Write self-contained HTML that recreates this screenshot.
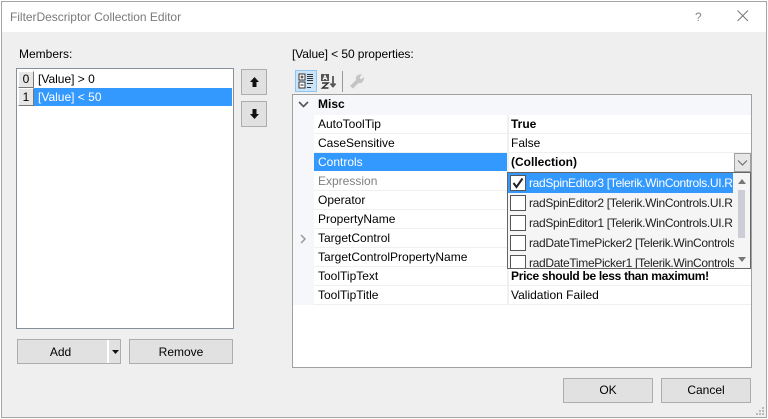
<!DOCTYPE html>
<html><head><meta charset="utf-8"><style>
html,body{margin:0;padding:0;width:768px;height:419px;overflow:hidden;background:#fff}
*{box-sizing:border-box}
body{font-family:"Liberation Sans",sans-serif;font-size:12px;color:#000;position:relative}
div,svg{position:absolute}
.t{white-space:nowrap;line-height:16px;height:16px}
.b{background:#e1e1e1;border:1px solid #adadad;text-align:center;line-height:23px}
.r{left:314px;width:194px;height:19px;border-bottom:1px solid #f0f0f0}
.v{left:509px;width:242px;height:19px;border-bottom:1px solid #f0f0f0}
.n{left:318px}
.p{left:511px}
.cb{left:510px;width:16px;height:16px;background:#fff;border:1px solid #555}
.it{left:529px;width:205px;overflow:hidden;color:#222;letter-spacing:-.33px}
</style></head><body>
<div style="left:1px;top:1px;width:766px;height:417px;background:#efefef;border:1px solid #a5a5a5"></div>
<div style="left:2px;top:2px;width:764px;height:30px;background:#fff"></div>
<div class="t" style="left:10px;top:9px;color:#7a7a7a;letter-spacing:-.03px">FilterDescriptor Collection Editor</div>
<div class="t" style="left:695px;top:9px;color:#8a8a8a">?</div>
<svg style="left:737px;top:10px" width="12" height="12"><path d="M.5.5l10.500 10.500M11 .5L.5 11" stroke="#777" fill="none"/></svg>

<div class="t" style="left:19px;top:46px">Members:</div>
<div style="left:16px;top:68px;width:218px;height:261px;background:#fff;border:1px solid #87919c"></div>
<div style="left:18px;top:71px;width:16px;height:17px;background:#e6e6e6;border:1px solid;border-color:#fff #777 #777 #fff;text-align:center;line-height:15px">0</div>
<div style="left:18px;top:88px;width:16px;height:18px;background:#e6e6e6;border:1px solid;border-color:#fff #777 #777 #fff;text-align:center;line-height:16px">1</div>
<div class="t" style="left:38px;top:71px">[Value] &gt; 0</div>
<div style="left:34px;top:88px;width:198px;height:18px;background:#3399ff"></div>
<div class="t" style="left:38px;top:89px;color:#fff">[Value] &lt; 50</div>

<div class="b" style="left:241px;top:69px;width:26px;height:26px"></div>
<svg style="left:249px;top:76px" width="11" height="12"><path d="M5.500 1L10 6H7.500V11H3.500V6H1z" fill="#111"/></svg>
<div class="b" style="left:241px;top:101px;width:26px;height:26px"></div>
<svg style="left:249px;top:108px" width="11" height="12"><path d="M3.500 1H7.500V6H10L5.500 11L1 6H3.500z" fill="#111"/></svg>

<div class="b" style="left:17px;top:339px;width:104px;height:25px;padding-right:17px;line-height:24px">Add</div>
<div style="left:107px;top:340px;width:2px;height:23px;background:#fff"></div>
<svg style="left:112px;top:350px" width="7" height="4"><path d="M0 0H7L3.500 4z" fill="#111"/></svg>
<div class="b" style="left:129px;top:339px;width:104px;height:25px;line-height:24px">Remove</div>

<div class="t" style="left:292px;top:46px;letter-spacing:-.08px">[Value] &lt; 50 properties:</div>
<div style="left:295px;top:70px;width:22px;height:22px;background:#cce4f7;border:1px solid #8fc4f0"></div>
<svg style="left:297px;top:72px" width="18" height="18"><path d="M2 2h6v6H2zM2 10h6v6H2z" fill="#fff" stroke="#333"/><path d="M3.500 5h3M5 3.500v3M3.500 13h3" stroke="#222" fill="none"/><path d="M10 2.500h6M10 4.500h6M10 6.500h6M10 8.500h6M10 11.500h6M10 15.500h4" stroke="#333" fill="none"/></svg>
<svg style="left:320px;top:73px" width="18" height="17"><path d="M1 1h8v7H1z" fill="#555"/><path d="M3 7L5 2.500L7 7M3.700 5.500h2.600" stroke="#fff" fill="none"/><path d="M2 10h6L2.500 15H8.500" stroke="#333" stroke-width="1.500" fill="none"/><path d="M13 3v10M10.500 10.500l2.500 3l2.500-3" stroke="#555" stroke-width="1.800" fill="none"/></svg>
<div style="left:342px;top:71px;width:1px;height:21px;background:#999"></div>
<svg style="left:349px;top:73px" width="16" height="16"><path d="M1 13L7 7C6 3.500 9 1 13 1.500L10.500 4.500L12 6.500L15 4C15.500 8 12.500 11 9.500 10L4 15.500z" fill="#c4c4c4"/></svg>

<div style="left:292px;top:94px;width:460px;height:274px;background:#fff;border:1px solid #a0a0a0"></div>
<div style="left:293px;top:95px;width:21px;height:210px;background:#f5f7fa"></div>
<div style="left:293px;top:95px;width:458px;height:20px;background:#f5f7fa"></div>
<svg style="left:298px;top:101px" width="11" height="7"><path d="M1 1l4.500 4.500L10 1" stroke="#555" stroke-width="1.600" fill="none"/></svg>
<div class="t" style="left:318px;top:96px;font-weight:bold">Misc</div>
<svg style="left:300px;top:234px" width="7" height="10"><path d="M1 1l4 4l-4 4" stroke="#999" stroke-width="1.500" fill="none"/></svg>

<div class="r" style="top:115px"></div><div class="v" style="top:115px"></div>
<div class="r" style="top:134px"></div><div class="v" style="top:134px"></div>
<div class="r" style="top:172px"></div>
<div class="r" style="top:191px"></div>
<div class="r" style="top:210px"></div>
<div class="r" style="top:229px"></div>
<div class="r" style="top:248px"></div>
<div class="r" style="top:267px"></div><div class="v" style="top:267px"></div>
<div class="r" style="top:286px"></div><div class="v" style="top:286px"></div>
<div style="left:507px;top:115px;width:2px;height:190px;background:#f0f0f0"></div>
<div style="left:314px;top:153px;width:193px;height:18px;background:#3399ff"></div>

<div class="t n" style="top:116px">AutoToolTip</div>
<div class="t n" style="top:135px">CaseSensitive</div>
<div class="t n" style="top:154px;color:#fff">Controls</div>
<div class="t n" style="top:173px;color:#808080">Expression</div>
<div class="t n" style="top:192px">Operator</div>
<div class="t n" style="top:211px">PropertyName</div>
<div class="t n" style="top:230px">TargetControl</div>
<div class="t n" style="top:249px">TargetControlPropertyName</div>
<div class="t n" style="top:268px">ToolTipText</div>
<div class="t n" style="top:287px">ToolTipTitle</div>

<div class="t p" style="top:116px;font-weight:bold">True</div>
<div class="t p" style="top:135px">False</div>
<div class="t p" style="top:154px;font-weight:bold">(Collection)</div>
<div class="t p" style="top:268px;font-weight:bold;letter-spacing:-.3px">Price should be less than maximum!</div>
<div class="t p" style="top:287px">Validation Failed</div>

<div style="left:734px;top:153px;width:17px;height:19px;background:#e6e6e6;border:1px solid #a0a0a0"></div>
<svg style="left:737px;top:160px" width="11" height="6"><path d="M1 .5l4.500 4.500L10 .5" stroke="#666" fill="none"/></svg>

<div style="left:507px;top:172px;width:244px;height:97px;background:#f5f5f5;border:1px solid #666;overflow:hidden"></div>
<div style="left:508px;top:173px;width:225px;height:20px;background:#3399ff"></div>
<div class="cb" style="top:175px"></div>
<svg style="left:512px;top:177px" width="12" height="12"><path d="M1.500 6L4.500 10L10.500 1.500" stroke="#222" stroke-width="2" fill="none"/></svg>
<div class="cb" style="top:195px"></div>
<div class="cb" style="top:215px"></div>
<div class="cb" style="top:235px"></div>
<div class="cb" style="top:255px;height:13px;border-bottom:0"></div>
<div class="t it" style="top:175px;color:#fff">radSpinEditor3 [Telerik.WinControls.UI.R</div>
<div class="t it" style="top:195px">radSpinEditor2 [Telerik.WinControls.UI.R</div>
<div class="t it" style="top:215px">radSpinEditor1 [Telerik.WinControls.UI.R</div>
<div class="t it" style="top:235px">radDateTimePicker2 [Telerik.WinControls</div>
<div class="t it" style="top:255px;height:13px">radDateTimePicker1 [Telerik.WinControls</div>
<div style="left:738px;top:190px;width:7px;height:48px;background:#cdcdd8"></div>
<svg style="left:738px;top:179px" width="8" height="5"><path d="M4 0L8 5H0z" fill="#777"/></svg>
<svg style="left:738px;top:257px" width="8" height="5"><path d="M0 0H8L4 5z" fill="#777"/></svg>

<div class="b" style="left:563px;top:378px;width:90px;height:25px">OK</div>
<div class="b" style="left:661px;top:378px;width:90px;height:25px">Cancel</div>
<svg style="left:755px;top:406px" width="10" height="10"><path d="M7 1h2v2H7zM4 4h2v2H4zM7 4h2v2H7zM1 7h2v2H1zM4 7h2v2H4zM7 7h2v2H7z" fill="#bbb"/></svg>
</body></html>
